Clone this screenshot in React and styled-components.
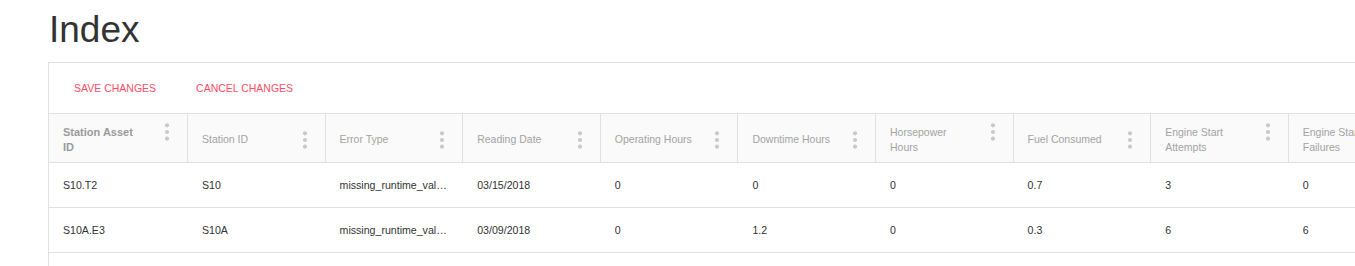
import React from "react";
import styled, { createGlobalStyle } from "styled-components";

const GlobalStyle = createGlobalStyle`
	html, body {
		margin: 0;
		padding: 0;
		background: #fff;
		overflow: hidden;
		font-family: "Liberation Sans", Arial, sans-serif;
	}
`;

const columns = [
	{ key: "assetId", label: "Station Asset ID", sorted: true },
	{ key: "stationId", label: "Station ID" },
	{ key: "errorType", label: "Error Type" },
	{ key: "readingDate", label: "Reading Date" },
	{ key: "operating", label: "Operating Hours" },
	{ key: "downtime", label: "Downtime Hours" },
	{ key: "horsepower", label: "Horsepower Hours" },
	{ key: "fuel", label: "Fuel Consumed" },
	{ key: "attempts", label: "Engine Start Attempts" },
	{ key: "failures", label: "Engine Start Failures" },
];

const rows = [
	{
		assetId: "S10.T2",
		stationId: "S10",
		errorType: "missing_runtime_values",
		readingDate: "03/15/2018",
		operating: "0",
		downtime: "0",
		horsepower: "0",
		fuel: "0.7",
		attempts: "3",
		failures: "0",
	},
	{
		assetId: "S10A.E3",
		stationId: "S10A",
		errorType: "missing_runtime_values",
		readingDate: "03/09/2018",
		operating: "0",
		downtime: "1.2",
		horsepower: "0",
		fuel: "0.3",
		attempts: "6",
		failures: "6",
	},
];

const gridTemplate = `139px repeat(${columns.length - 1}, 137.6px)`;

const MoreIcon = () => (
	<svg width="8" height="18" viewBox="0 0 8 18">
		<circle cx="4" cy="2.3" r="2.1" fill="#c9c9c9" />
		<circle cx="4" cy="9" r="2.1" fill="#c9c9c9" />
		<circle cx="4" cy="15.7" r="2.1" fill="#c9c9c9" />
	</svg>
);

const App = () => {
	return (
		<Page>
			<GlobalStyle />
			<Title>Index</Title>
			<Panel>
				<Toolbar>
					<ActionButton>Save Changes</ActionButton>
					<ActionButton>Cancel Changes</ActionButton>
				</Toolbar>
				<HeaderRow>
					{columns.map((col) => (
						<HeaderCell key={col.key}>
							<HeaderInner>
								<HeaderLabel $sorted={col.sorted}>{col.label}</HeaderLabel>
								<Dots>
									<MoreIcon />
								</Dots>
							</HeaderInner>
						</HeaderCell>
					))}
				</HeaderRow>
				{rows.map((row) => (
					<DataRow key={row.assetId}>
						{columns.map((col) => (
							<DataCell key={col.key}>{row[col.key]}</DataCell>
						))}
					</DataRow>
				))}
				<Filler />
			</Panel>
		</Page>
	);
};

const Page = styled.div`
	padding: 9px 0 0 48px;
`;

const Title = styled.h1`
	margin: 0 0 11px 1px;
	font-size: 37px;
	line-height: 42px;
	font-weight: 400;
	color: #333;
`;

const Panel = styled.div`
	width: max-content;
	border-top: 1px solid #e0e0e0;
	border-left: 1px solid #e0e0e0;
	background: #fff;
`;

const Toolbar = styled.div`
	display: flex;
	align-items: center;
	gap: 7px;
	height: 50px;
	padding: 0 8px;
	border-bottom: 1px solid #e0e0e0;
`;

const ActionButton = styled.button`
	height: 36px;
	padding: 0 16px 0 17px;
	border: none;
	background: transparent;
	color: #ff4d66;
	font-family: "Liberation Sans", Arial, sans-serif;
	font-size: 10.5px;
	text-transform: uppercase;
	cursor: pointer;
`;

const HeaderRow = styled.div`
	display: grid;
	grid-template-columns: ${gridTemplate};
	background: #fafafa;
	border-bottom: 1px solid #e0e0e0;
`;

const HeaderCell = styled.div`
	box-sizing: border-box;
	display: flex;
	align-items: center;
	height: 48px;
	padding: 3px 16px 0 14px;
	border-right: 1px solid #e0e0e0;
`;

const HeaderInner = styled.div`
	display: flex;
	align-items: flex-start;
	width: 100%;
`;

const HeaderLabel = styled.span`
	max-width: 80px;
	font-size: ${(p) => (p.$sorted ? "11px" : "10.5px")};
	font-weight: ${(p) => (p.$sorted ? 700 : 400)};
	line-height: 15px;
	color: ${(p) => (p.$sorted ? "#9a9a9a" : "#a3a3a3")};
`;

const Dots = styled.span`
	display: flex;
	margin: -1.5px 0 -1.5px auto;
`;

const DataRow = styled.div`
	display: grid;
	grid-template-columns: ${gridTemplate};
	height: 45px;
	box-sizing: border-box;
	border-bottom: 1px solid #e0e0e0;
`;

const DataCell = styled.div`
	box-sizing: border-box;
	min-width: 0;
	padding: 0 15px 0 14px;
	font-size: 10.6px;
	line-height: 44px;
	color: #333;
	white-space: nowrap;
	overflow: hidden;
	text-overflow: ellipsis;
`;

const Filler = styled.div`
	height: 40px;
`;

export default App;
